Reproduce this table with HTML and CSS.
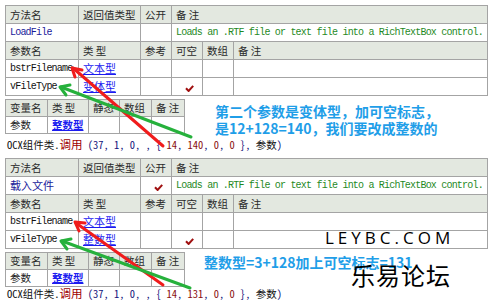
FILE: index.html
```html
<!DOCTYPE html>
<html>
<head>
<meta charset="utf-8">
<link rel="stylesheet" href="styles.css">
</head>
<body>
<div class="page">
  <table class="grid main">
    <colgroup><col class="m1"><col class="m2"><col class="m3"><col class="m4"><col class="m5"><col class="m6"></colgroup>
    <tr class="hd"><td>方法名</td><td>返回值类型</td><td>公开</td><td colspan="3">备 注</td></tr>
    <tr><td class="code name">LoadFile</td><td></td><td></td><td colspan="3" class="code cmt">Loads an .RTF file or text file into a RichTextBox control.</td></tr>
    <tr class="hd"><td>参数名</td><td>类 型</td><td>参考</td><td>可空</td><td>数组</td><td>备 注</td></tr>
    <tr><td class="code">bstrFilename</td><td><span class="type">文本型</span></td><td></td><td></td><td></td><td></td></tr>
    <tr><td class="code">vFileType</td><td><span class="type">变体型</span></td><td></td><td class="chk"><svg width="9" height="7" viewBox="0 0 9 7"><path d="M1 3.2 L3.6 6 L8.2 0.8" fill="none" stroke="#a01010" stroke-width="2"/></svg></td><td></td><td></td></tr>
  </table>

  <div class="varrow first">
    <table class="grid small">
      <colgroup><col class="s1"><col class="s2"><col class="s3"><col class="s4"><col class="s5"></colgroup>
      <tr class="hd"><td>变量名</td><td>类 型</td><td>静态</td><td>数组</td><td>备 注</td></tr>
      <tr><td>参数</td><td><span class="type strong">整数型</span></td><td></td><td></td><td></td></tr>
    </table>
    <div class="note note1">第二个参数是变体型，加可空标志，<br>是12+128=140，我们要改成整数的</div>
  </div>

  <div class="ocx one"><span class="blk">OCX组件类</span>.<span class="call">调用</span> <span class="arg">(37, 1, 0, , { <span class="num">14</span>, <span class="num">140</span>, <span class="num">0</span>, <span class="num">0</span> }, </span><span class="blk">参数</span><span class="arg">)</span></div>

  <table class="grid main second">
    <colgroup><col class="m1"><col class="m2"><col class="m3"><col class="m4"><col class="m5"><col class="m6"></colgroup>
    <tr class="hd"><td>方法名</td><td>返回值类型</td><td>公开</td><td colspan="3">备 注</td></tr>
    <tr><td class="name cjk">载入文件</td><td></td><td class="chk"><svg width="9" height="7" viewBox="0 0 9 7"><path d="M1 3.2 L3.6 6 L8.2 0.8" fill="none" stroke="#a01010" stroke-width="2"/></svg></td><td colspan="3" class="code cmt">Loads an .RTF file or text file into a RichTextBox control.</td></tr>
    <tr class="hd"><td>参数名</td><td>类 型</td><td>参考</td><td>可空</td><td>数组</td><td>备 注</td></tr>
    <tr><td class="code">bstrFilename</td><td><span class="type">文本型</span></td><td></td><td></td><td></td><td></td></tr>
    <tr><td class="code">vFileType</td><td><span class="type">整数型</span></td><td></td><td class="chk"><svg width="9" height="7" viewBox="0 0 9 7"><path d="M1 3.2 L3.6 6 L8.2 0.8" fill="none" stroke="#a01010" stroke-width="2"/></svg></td><td></td><td></td></tr>
  </table>

  <div class="varrow second">
    <table class="grid small">
      <colgroup><col class="s1"><col class="s2"><col class="s3"><col class="s4"><col class="s5"></colgroup>
      <tr class="hd"><td>变量名</td><td>类 型</td><td>静态</td><td>数组</td><td>备 注</td></tr>
      <tr><td>参数</td><td><span class="type strong">整数型</span></td><td></td><td></td><td></td></tr>
    </table>
    <div class="note note2">整数型=3+128加上可空标志=131</div>
  </div>

  <div class="ocx two"><span class="blk">OCX组件类</span>.<span class="call">调用</span> <span class="arg">(37, 1, 0, , { <span class="num">14</span>, <span class="num">131</span>, <span class="num">0</span>, <span class="num">0</span> }, </span><span class="blk">参数</span><span class="arg">)</span></div>

  <div class="mark-en">LEYBC.COM</div>
  <div class="mark-cn">乐易论坛</div>

  <svg class="arrows" width="500" height="306" viewBox="0 0 500 306">
    <g fill="none" stroke-width="3" stroke-linecap="round" stroke-linejoin="round">
      <g stroke="#f01c1c">
        <line x1="163" y1="146" x2="73" y2="68"/>
        <polyline points="82,70 72,68 75,77"/>
        <line x1="163" y1="285" x2="76" y2="223"/>
        <polyline points="85,223 75,222 79,231"/>
      </g>
      <g stroke="#26b13c">
        <line x1="191" y1="137" x2="61" y2="87"/>
        <polyline points="70,85 60,87 66,95"/>
        <line x1="190" y1="288" x2="62" y2="241"/>
        <polyline points="71,239 61,241 67,249"/>
      </g>
    </g>
  </svg>
</div>
</body>
</html>
```

FILE: styles.css
```css
html, body {
  margin: 0;
  padding: 0;
  background: #ffffff;
}

.page {
  position: relative;
  width: 500px;
  height: 306px;
  box-sizing: border-box;
  padding: 5px 0 0 5px;
  overflow: hidden;
  font-family: "Noto Sans CJK SC", sans-serif;
  font-size: 10.5px;
  color: #222222;
}

.grid {
  border-collapse: collapse;
  table-layout: fixed;
}

.grid td {
  border: 1px solid #a4a4a4;
  height: 17px;
  padding: 0 0 0 4px;
  line-height: 17px;
  white-space: nowrap;
  overflow: hidden;
  vertical-align: middle;
}

.hd td {
  background: #e3e8e0;
  color: #2a2a2a;
}

.main { width: 483px; }
.m1 { width: 73px; }
.m2 { width: 62px; }
.m3 { width: 31px; }
.m4 { width: 31px; }
.m5 { width: 31px; }
.m6 { width: 254px; }

.small { width: 180px; }
.small td { height: 16px; line-height: 16px; }
.s1 { width: 42px; }
.s2 { width: 41px; }
.s3 { width: 31px; }
.s4 { width: 32px; }
.s5 { width: 33px; }

.code {
  font-family: "Liberation Mono", monospace;
  font-size: 10px;
  letter-spacing: -0.8px;
  color: #111111;
}

.name { color: #1a1a9a; }
.cjk { font-family: "Noto Sans CJK SC", sans-serif; font-size: 11px; letter-spacing: 0; }
.cmt { color: #1f8a1f; }

.type {
  color: #1c1cf0;
  text-decoration: underline;
  font-size: 11px;
}

.type.strong { font-weight: 700; font-size: 10.5px; }

.chk {
  text-align: center;
  padding: 0;
}

.chk svg { display: inline-block; vertical-align: middle; }

.varrow {
  display: flex;
  align-items: flex-start;
  overflow: visible;
}

.varrow.first { margin-top: 3px; height: 34px; }
.varrow.second { margin-top: 3px; height: 35px; }

.note {
  color: #1f9ee8;
  font-weight: 700;
  font-size: 14px;
  line-height: 17px;
  font-family: "Noto Sans CJK SC", sans-serif;
  flex: none;
}

.note1 { margin: 4px 0 0 30px; }
.note2 { margin: 2px 0 0 19px; }

.ocx {
  font-family: "Noto Sans Mono CJK SC", "Noto Sans CJK SC", sans-serif;
  font-size: 10.5px;
  padding-left: 2px;
  white-space: pre;
  color: #111111;
}

.ocx.one { margin-top: 3px; line-height: 16px; height: 16px; margin-bottom: 6px; }
.ocx.two { line-height: 13px; height: 13px; }

.call { color: #a00000; font-size: 11.5px; }
.arg { color: #12127a; }
.num { color: #8a1010; }
.blk { color: #111111; }

.mark-en {
  position: absolute;
  left: 325px;
  top: 228px;
  font-family: "Open Sans", sans-serif;
  font-weight: 400;
  font-size: 17px;
  letter-spacing: 4px;
  color: #000000;
  line-height: 20px;
}

.mark-cn {
  position: absolute;
  left: 351px;
  top: 261px;
  font-family: "Noto Sans CJK SC", sans-serif;
  font-size: 24px;
  letter-spacing: 1px;
  line-height: 28px;
  color: #000000;
}

.arrows {
  position: absolute;
  left: 0;
  top: 0;
  pointer-events: none;
}
```
